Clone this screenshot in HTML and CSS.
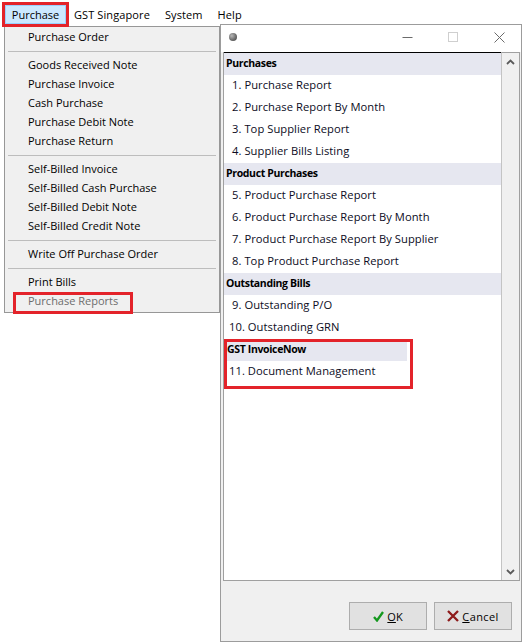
FILE: index.html
```html
<!DOCTYPE html>
<html>
<head>
<meta charset="utf-8">
<link rel="stylesheet" href="styles.css">
</head>
<body>
<div class="screen">
  <nav class="menubar">
    <div class="mb-active"><span class="mb-hl">Purchase</span></div>
    <div class="mb-item first">GST Singapore</div>
    <div class="mb-item">System</div>
    <div class="mb-item">Help</div>
  </nav>

  <ul class="dropdown">
    <li class="mi">Purchase Order</li>
    <li class="sep"></li>
    <li class="mi">Goods Received Note</li>
    <li class="mi">Purchase Invoice</li>
    <li class="mi">Cash Purchase</li>
    <li class="mi">Purchase Debit Note</li>
    <li class="mi">Purchase Return</li>
    <li class="sep"></li>
    <li class="mi">Self-Billed Invoice</li>
    <li class="mi">Self-Billed Cash Purchase</li>
    <li class="mi">Self-Billed Debit Note</li>
    <li class="mi">Self-Billed Credit Note</li>
    <li class="sep"></li>
    <li class="mi">Write Off Purchase Order</li>
    <li class="sep"></li>
    <li class="mi">Print Bills</li>
    <li class="mi disabled"><span class="annot-menu"></span>Purchase Reports</li>
  </ul>

  <section class="dialog">
    <header class="titlebar">
      <span class="dot"></span>
      <span class="spacer"></span>
      <span class="cap">
        <svg width="11" height="11" viewBox="0 0 11 11"><path d="M0.5 5.5 H10.5" stroke="#6b6b6b" stroke-width="1" fill="none"/></svg>
      </span>
      <span class="cap">
        <svg width="11" height="11" viewBox="0 0 11 11"><rect x="0.5" y="0.5" width="9" height="9" stroke="#cfcfcf" stroke-width="1" fill="none"/></svg>
      </span>
      <span class="cap">
        <svg width="11" height="11" viewBox="0 0 11 11"><path d="M0.5 0.5 L10.5 10.5 M10.5 0.5 L0.5 10.5" stroke="#6b6b6b" stroke-width="1" fill="none"/></svg>
      </span>
    </header>

    <div class="listbox">
      <div class="list">
        <div class="grp">Purchases</div>
        <div class="row">1. Purchase Report</div>
        <div class="row">2. Purchase Report By Month</div>
        <div class="row">3. Top Supplier Report</div>
        <div class="row">4. Supplier Bills Listing</div>
        <div class="grp">Product Purchases</div>
        <div class="row">5. Product Purchase Report</div>
        <div class="row">6. Product Purchase Report By Month</div>
        <div class="row">7. Product Purchase Report By Supplier</div>
        <div class="row">8. Top Product Purchase Report</div>
        <div class="grp">Outstanding Bills</div>
        <div class="row">9. Outstanding P/O</div>
        <div class="row wide">10. Outstanding GRN</div>
        <div class="annot-group">
          <div class="grp short">GST InvoiceNow</div>
          <div class="row wide">11. Document Management</div>
        </div>
      </div>
      <div class="scroll">
        <span class="arrow">
          <svg width="9" height="6" viewBox="0 0 9 6"><path d="M1 5 L4.5 1.5 L8 5" stroke="#5a5a5a" stroke-width="1.8" fill="none"/></svg>
        </span>
        <span class="arrow">
          <svg width="9" height="6" viewBox="0 0 9 6"><path d="M1 1 L4.5 4.5 L8 1" stroke="#5a5a5a" stroke-width="1.8" fill="none"/></svg>
        </span>
      </div>
    </div>

    <footer class="buttons">
      <button class="btn">
        <svg width="11" height="11" viewBox="0 0 11 11"><path d="M1 6 L4 9.5 L10 1" stroke="#14981e" stroke-width="2.3" fill="none"/></svg>
        <span><u>O</u>K</span>
      </button>
      <button class="btn">
        <svg width="12" height="12" viewBox="0 0 12 12"><path d="M1 1 L11 11 M11 1 L1 11" stroke="#8e1b1b" stroke-width="2.3" fill="none"/></svg>
        <span class="wide-text"><u>C</u>ancel</span>
      </button>
    </footer>
  </section>
</div>
</body>
</html>
```

FILE: styles.css
```css
* {
  box-sizing: border-box;
  margin: 0;
  padding: 0;
}

html, body {
  width: 524px;
  height: 643px;
  overflow: hidden;
  background: #ffffff;
}

body {
  font-family: "Open Sans", "Noto Sans", sans-serif;
  font-size: 11px;
  color: #000000;
}

.screen {
  position: relative;
  width: 524px;
  height: 643px;
}

/* ---------- menubar ---------- */
.menubar {
  position: relative;
  z-index: 3;
  display: flex;
  align-items: flex-start;
  height: 27px;
  padding: 2px 0 0 2px;
}

.mb-active {
  border: 3px solid #e3232a;
  height: 25px;
}

.mb-hl {
  display: block;
  width: 61px;
  height: 19px;
  line-height: 18px;
  text-align: center;
  background: #cce8ff;
  border: 1px solid #99d1ff;
}

.mb-item {
  padding: 0 7px 0 8px;
  line-height: 26px;
  white-space: nowrap;
  letter-spacing: 0.1px;
}

.mb-item.first {
  padding-left: 5px;
}

/* ---------- dropdown ---------- */
.dropdown {
  position: absolute;
  z-index: 2;
  left: 4px;
  top: 26px;
  width: 216px;
  list-style: none;
  background: #f0f0f0;
  border: 1px solid #979797;
  padding: 1px 0;
}

.mi {
  position: relative;
  height: 19px;
  line-height: 17px;
  padding-left: 23px;
  white-space: nowrap;
}

.mi.disabled {
  color: #6d6d6d;
}

.sep {
  height: 0;
  margin: 4px 3px;
  border-top: 1px solid #bdbdbd;
}

.annot-menu {
  position: absolute;
  left: 8px;
  top: 0;
  width: 120px;
  height: 22px;
  border: 3px solid #e3232a;
}

/* ---------- dialog ---------- */
.dialog {
  position: absolute;
  z-index: 1;
  left: 220px;
  top: 24px;
  width: 302px;
  height: 618px;
  background: #f0f0f0;
  border: 1px solid #9c9c9c;
  display: flex;
  flex-direction: column;
}

.titlebar {
  height: 27px;
  flex: none;
  background: #ffffff;
  display: flex;
  align-items: center;
}

.dot {
  width: 8px;
  height: 8px;
  margin: 0 0 3px 8px;
  border-radius: 50%;
  background: radial-gradient(circle at 35% 35%, #b8b8b8 0%, #6e6e6e 55%, #3c3c3c 100%);
}

.spacer {
  flex: 1;
}

.cap {
  width: 46px;
  height: 27px;
  display: flex;
  align-items: center;
  justify-content: center;
  padding-bottom: 2px;
}

.cap:last-child {
  margin-right: -1px;
}

.listbox {
  flex: none;
  height: 529px;
  margin: 0 1px 0 2px;
  display: flex;
  background: #ffffff;
  border: 1px solid #a0a0a0;
  border-top: 0;
}

.list {
  flex: 1;
  border-top: 1px solid #000000;
  overflow: hidden;
}

.grp {
  height: 22px;
  line-height: 21px;
  padding-left: 2px;
  background: #e6e7f0;
  font-size: 10.5px;
  font-weight: 700;
  letter-spacing: -0.35px;
  white-space: nowrap;
}

.grp.short {
  width: 183px;
  padding-left: 3px;
}

.row {
  height: 22px;
  line-height: 20px;
  padding-left: 8px;
  font-size: 11.2px;
  letter-spacing: 0.05px;
  color: #0c0c24;
  white-space: nowrap;
}

.row.wide {
  padding-left: 5px;
}

.annot-group {
  position: relative;
}

.annot-group::after {
  content: "";
  position: absolute;
  left: 0;
  top: 0;
  width: 183px;
  height: 44px;
  border: 3px solid #e3232a;
}

.scroll {
  width: 18px;
  flex: none;
  background: #f0f0f0;
  border-left: 1px solid #c4c4c4;
  border-top: 1px solid #a0a0a0;
  display: flex;
  flex-direction: column;
  justify-content: space-between;
}

.arrow {
  height: 17px;
  display: flex;
  align-items: center;
  justify-content: center;
}

.buttons {
  display: flex;
  justify-content: flex-end;
  gap: 7px;
  margin-top: 21px;
  padding-right: 9px;
}

.btn {
  width: 78px;
  height: 28px;
  background: #e1e1e1;
  border: 1px solid #adadad;
  font-family: "Open Sans", "Noto Sans", sans-serif;
  font-size: 11px;
  color: #000000;
  display: flex;
  align-items: center;
  justify-content: center;
  gap: 3px;
}

.btn u {
  text-decoration-thickness: 1px;
  text-underline-offset: 1px;
}

.wide-text {
  letter-spacing: 0.4px;
}
```
